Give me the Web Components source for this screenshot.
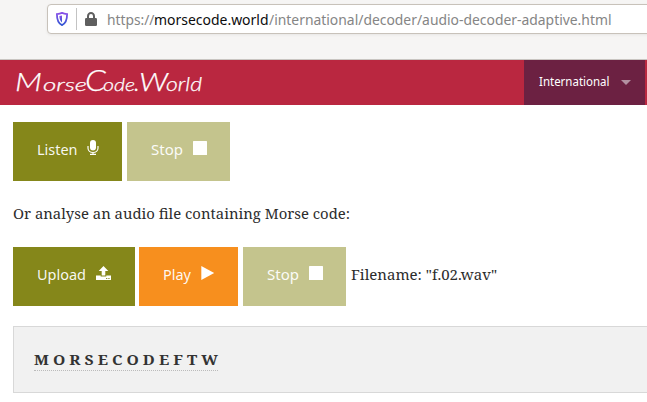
<!DOCTYPE html>
<html lang="en">
<head>
<meta charset="utf-8">
<title>Morse Code Adaptive Audio Decoder</title>
<style>
html,body{margin:0;background:#fff;overflow:hidden}
body{width:647px;height:402px;color:#2d2d2d}
</style>
</head>
<body>
<decoder-page></decoder-page>
<script>
const define = (name, html, setup) => customElements.define(name, class extends HTMLElement {
  connectedCallback() {
    if (this.shadowRoot) return;
    this.attachShadow({mode: 'open'}).innerHTML = html;
    if (setup) setup.call(this, this.shadowRoot);
  }
});

// One line of text set to an exact measure; the baseline is 16px below the top.
define('fit-text', `<style>
  :host{display:block;flex:none;height:22px}
  svg{display:block;overflow:visible}
  text{fill:currentColor;white-space:pre}
</style><svg height="22"><text y="16" lengthAdjust="spacingAndGlyphs"></text></svg>`, function (root) {
  const w = this.getAttribute('measure');
  const text = root.querySelector('text');
  root.querySelector('svg').setAttribute('width', w);
  text.setAttribute('textLength', w);
  text.textContent = this.textContent;
});

// Wordmark: tall capitals with small, wide lowercase letters.
define('word-mark', `<style>
  :host{display:block;margin-left:14px;height:45px}
  svg{display:block;overflow:visible}
  text{fill:#fff;font:italic 300 17px Lato,sans-serif;stroke:#fff;stroke-width:.25}
  .cap{font-size:25px}.tall{font-size:30px}
</style><svg width="190" height="45"><text y="31"><tspan class="cap" x="1" textLength="27" lengthAdjust="spacingAndGlyphs">M</tspan><tspan x="29" textLength="44" lengthAdjust="spacingAndGlyphs">orse</tspan><tspan class="tall" x="71" textLength="21" lengthAdjust="spacingAndGlyphs">C</tspan><tspan x="89" textLength="32" lengthAdjust="spacingAndGlyphs">ode</tspan><tspan class="cap" x="120">.</tspan><tspan class="cap" x="125" textLength="29" lengthAdjust="spacingAndGlyphs">W</tspan><tspan x="152" textLength="36" font-size="19" lengthAdjust="spacingAndGlyphs">orld</tspan></text></svg>`);

const icons = {
  mic: '<svg width="12" height="15"><rect x="3" y="0" width="6" height="10.5" rx="3" fill="#fff"/><path d="M1 6v2.3a5 4.2 0 0 0 10 0V6M6 12.5V14M3 14.3h6" fill="none" stroke="#fff" stroke-width="1.2"/></svg>',
  stop: '<svg width="14" height="15"><rect y="1" width="14" height="14" rx=".5" fill="#fff"/></svg>',
  upload: '<svg width="15" height="15"><path d="M7.5 1 12.3 6H9.3v4.5H5.7V6H2.7zM0 10.5h4.7v1h5.6v-1H15V15H0z" fill="#fff"/><path d="M10 13.5h1.3M12.3 13.5h1.3" stroke="#85871a" stroke-width=".9"/></svg>',
  play: '<svg width="14" height="15"><path d="M.3 1 13.2 8 .3 15z" fill="#fff"/></svg>'
};

define('action-button', `<style>
  :host{display:flex;flex:none;box-sizing:border-box;height:59px;padding:17px 0 0 24px;background:#85871a;color:#fffffff0;font:14.5px "Noto Sans",sans-serif}
  :host([tone=muted]){background:#c4c48d}
  :host([tone=orange]){background:#f78f1e}
  .icon{margin:1px 0 0 9.5px;height:15px}
  .icon svg{display:block}
</style><slot></slot><span class="icon"></span>`, function (root) {
  root.querySelector('.icon').innerHTML = icons[this.getAttribute('icon')];
  this.style.width = this.getAttribute('width') + 'px';
});

define('address-bar', `<style>
  :host{display:block;height:59px;border-bottom:1px solid #c9c5c1;background:#f6f5f4;overflow:hidden}
  .field{box-sizing:border-box;display:flex;width:620px;height:30px;margin:4px 0 0 47px;border:1px solid #c8c2ba;border-radius:4px;background:#fff;box-shadow:0 1px 3px #00000010;color:#858585;font:15px "Noto Sans",sans-serif}
  .shield{margin:7px 0 0 8px}
  .lock{margin:7px 0 0 8px}
  i{width:1px;height:22px;margin:3px 0 0 8px;background:#c3c3c3}
  .url{display:flex;margin:4px 0 0 9.5px}
  .host{color:#0c0c0d}
</style>
<div class="field">
  <svg class="shield" width="12" height="14"><defs><linearGradient id="g" x2="0" y2="1"><stop stop-color="#8a50e8"/><stop offset="1" stop-color="#3157d3"/></linearGradient></defs><path d="M6 .9C4.4 1.7 2.6 2 .9 2.1c0 4.6.3 9.1 5.1 11 4.8-1.9 5.1-6.4 5.1-11C9.400 2 7.600 1.700 6 .9z" fill="none" stroke="url(#g)" stroke-width="1.8"/><path d="M6 3.500v7C3.800 9 3.500 6.500 3.400 4.100z" fill="url(#g)"/></svg>
  <i></i>
  <svg class="lock" width="12" height="14"><path d="M3 7V4.200a3 3.200 0 0 1 6 0V7" fill="none" stroke="#5f5f5f" stroke-width="2"/><rect y="6" width="12" height="8" rx="1.2" fill="#5f5f5f"/></svg>
  <div class="url"><fit-text measure="47.500">https://</fit-text><fit-text class="host" measure="114.500">morsecode.world</fit-text><fit-text measure="342.500">/international/decoder/audio-decoder-adaptive.html</fit-text></div>
</div>`);

define('site-header', `<style>
  :host{box-sizing:border-box;display:flex;justify-content:space-between;height:45px;padding-right:2px;background:#ba2740;color:#fff}
  .menu{box-sizing:border-box;display:flex;width:121px;height:45px;padding:10px 0 0 15px;background:#6c2142;font:12.5px "Noto Sans",sans-serif}
  .menu svg{margin:10px 0 0 11px}
</style>
<word-mark></word-mark>
<div class="menu"><fit-text measure="70.500">International</fit-text><svg width="10" height="5"><path d="M0 0h10L5 5z" fill="#b390a1"/></svg></div>`);

define('decoded-output', `<style>
  :host{box-sizing:border-box;display:block;height:67px;margin:20px -2px 0 13px;padding:22px 0 0 20px;border:1px solid #d8d8d8;background:#f1f1f1;color:#333;font:bold 14.500px "Noto Serif","Liberation Serif",serif}
  .line{width:184px;height:21px;border-bottom:1px dotted #bbb}
</style><div class="line"><slot></slot></div>`);

define('decoder-page', `<style>
  :host{display:block;font:15px "Noto Serif","Droid Serif","Liberation Serif",serif;color:#2d2d2d}
  .row{display:flex;padding-left:13px}
  .first{margin-top:17px;gap:5px}
  .copy{margin:22px 0 0 13px}
  .second{margin-top:22px}
  .play{margin-left:4px}.stop{margin-left:5px}
  .file{margin:17px 0 0 5px}
</style>
<address-bar></address-bar>
<site-header></site-header>
<div class="row first">
  <action-button width="109" icon="mic"><fit-text measure="40.500">Listen</fit-text></action-button>
  <action-button width="103" icon="stop" tone="muted"><fit-text measure="32">Stop</fit-text></action-button>
</div>
<fit-text class="copy" measure="337">Or analyse an audio file containing Morse code:</fit-text>
<div class="row second">
  <action-button width="122" icon="upload"><fit-text measure="49">Upload</fit-text></action-button>
  <action-button class="play" width="99" icon="play" tone="orange"><fit-text measure="28">Play</fit-text></action-button>
  <action-button class="stop" width="103" icon="stop" tone="muted"><fit-text measure="32">Stop</fit-text></action-button>
  <fit-text class="file" measure="146">Filename: "f.02.wav"</fit-text>
</div>
<decoded-output><fit-text measure="184">M O R S E C O D E F T W</fit-text></decoded-output>`);
</script>
</body>
</html>
